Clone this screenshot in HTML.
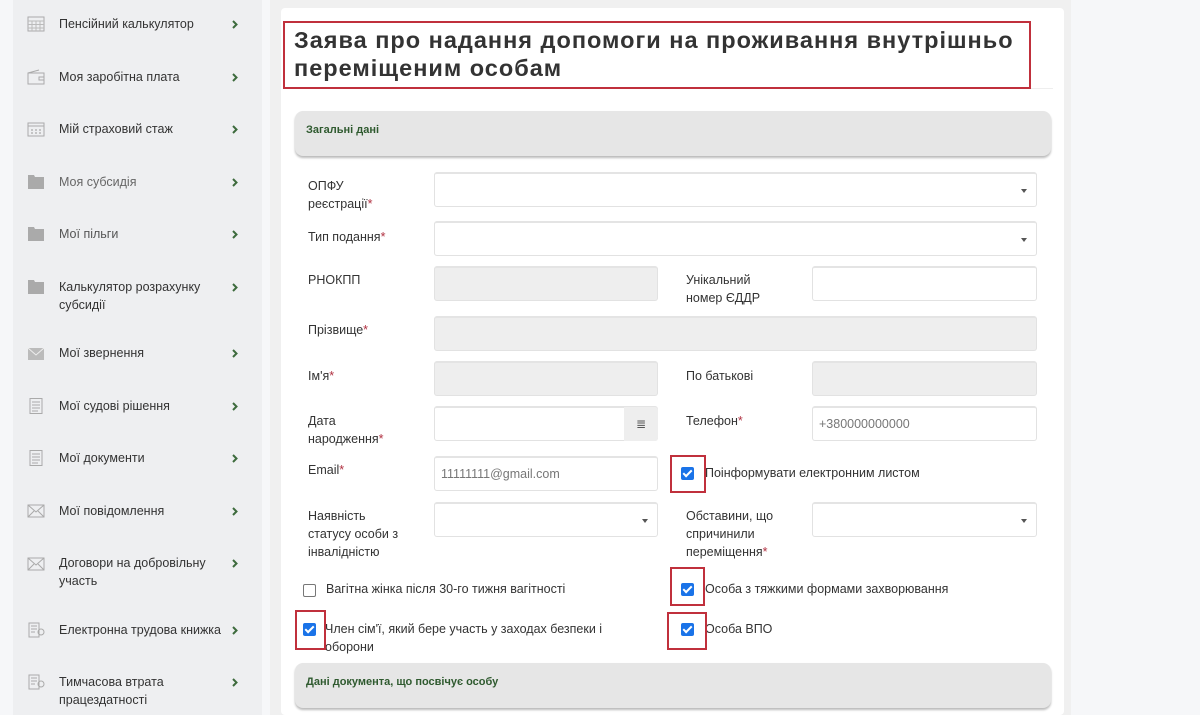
<!DOCTYPE html>
<html><head><meta charset="utf-8">
<style>
*{box-sizing:border-box;margin:0;padding:0}
body{width:1200px;height:715px;overflow:hidden;background:#f6f7f9;font-family:"Liberation Sans","DejaVu Sans",sans-serif;color:#333;position:relative}
.a{position:absolute}
#side{left:13px;top:0;width:249px;height:715px;background:#eeeff1}
.it{position:absolute;left:59px;font-size:12.5px;line-height:18px;color:#333}
.ic{position:absolute;left:27px;width:18px;height:16px}
.ch{position:absolute;left:232px;width:6px;height:9px}
#strip{left:270px;top:0;width:801px;height:715px;background:#f0f0f0}
#card{left:281px;top:8px;width:783px;height:707px;background:#fff;border-radius:4px}
.sec{position:absolute;left:295px;width:756px;height:45px;background:#e6e6e6;border-radius:8px;box-shadow:0 2px 2px #bbb}
.sec span{position:absolute;left:11px;top:13px;font-size:11px;font-weight:bold;color:#2f5a2f;font-style:normal}
.lb{position:absolute;font-size:12.5px;line-height:18px;color:#333}
.lb i{color:#b03040;font-style:normal}
.in{position:absolute;height:35px;border:1px solid #e2e2e2;border-top:2px solid #e4e4e4;border-radius:3px;background:#fff;font-size:12.5px;color:#777;padding:9px 6px}
.g{background:#eeeeee}
.dd:after{content:"";position:absolute;right:9px;top:15px;border:3px solid transparent;border-top:4px solid #555}
.cb{position:absolute;width:13px;height:13px;border-radius:2px;background:#1a73e8}
.cb:after{content:"";position:absolute;left:4px;top:1px;width:3px;height:7px;border:solid #fff;border-width:0 2px 2px 0;transform:rotate(45deg)}
.cbe{position:absolute;width:13px;height:13px;border-radius:2px;border:1px solid #777;background:#fff}
.rb{position:absolute;border:2px solid #c0303c}
</style></head><body>
<div id="side" class="a"></div>
<svg width="0" height="0" style="position:absolute"><defs><symbol id="chv" viewBox="0 0 6 9"><path d="M1 1L4.5 4.5L1 8" fill="none" stroke="#3d6b3d" stroke-width="2"/></symbol></defs></svg>
<svg class="ic" style="top:16px" viewBox="0 0 18 16"><rect x="1" y="1" width="16" height="14" fill="none" stroke="#aaa"/><path d="M1 5H17M1 8.5H17M1 12H17M5 5V15M9 5V15M13 5V15" stroke="#bbb"/></svg>
<div class="it" style="top:15px">Пенсійний калькулятор</div><svg class="ch" style="top:20px"><use href="#chv"/></svg>
<svg class="ic" style="top:69px" viewBox="0 0 18 16"><path d="M1 4H17V15H1Z M1 4L12 1" fill="none" stroke="#aaa"/><rect x="12" y="8" width="5" height="3" fill="none" stroke="#aaa"/></svg>
<div class="it" style="top:68px">Моя заробітна плата</div><svg class="ch" style="top:73px"><use href="#chv"/></svg>
<svg class="ic" style="top:121px" viewBox="0 0 18 16"><rect x="1" y="2" width="16" height="13" fill="none" stroke="#aaa"/><path d="M1 5H17" stroke="#aaa"/><path d="M4 9h2M8 9h2M12 9h2M4 12h2M8 12h2M12 12h2" stroke="#999"/></svg>
<div class="it" style="top:120px">Мій страховий стаж</div><svg class="ch" style="top:125px"><use href="#chv"/></svg>
<svg class="ic" style="top:174px" viewBox="0 0 18 16"><path d="M1 1H7L8 3H17V15H1Z" fill="#aaa"/></svg>
<div class="it" style="top:173px;color:#666">Моя субсидія</div><svg class="ch" style="top:178px"><use href="#chv"/></svg>
<svg class="ic" style="top:226px" viewBox="0 0 18 16"><path d="M1 1H7L8 3H17V15H1Z" fill="#aaa"/></svg>
<div class="it" style="top:225px;color:#555">Мої пільги</div><svg class="ch" style="top:230px"><use href="#chv"/></svg>
<svg class="ic" style="top:279px" viewBox="0 0 18 16"><path d="M1 1H7L8 3H17V15H1Z" fill="#aaa"/></svg>
<div class="it" style="top:278px">Калькулятор розрахунку<br>субсидії</div><svg class="ch" style="top:283px"><use href="#chv"/></svg>
<svg class="ic" style="top:346px" viewBox="0 0 18 16"><rect x="1" y="2" width="16" height="12" fill="#bbb"/><path d="M1 2L9 9L17 2" stroke="#eee" fill="none"/></svg>
<div class="it" style="top:344px">Мої звернення</div><svg class="ch" style="top:349px"><use href="#chv"/></svg>
<svg class="ic" style="top:398px" viewBox="0 0 18 16"><rect x="3" y="0.5" width="12" height="15" fill="none" stroke="#aaa"/><path d="M5 4h8M5 7h8M5 10h8M5 13h6" stroke="#aaa"/></svg>
<div class="it" style="top:397px">Мої судові рішення</div><svg class="ch" style="top:402px"><use href="#chv"/></svg>
<svg class="ic" style="top:450px" viewBox="0 0 18 16"><rect x="3" y="0.5" width="12" height="15" fill="none" stroke="#aaa"/><path d="M5 4h8M5 7h8M5 10h8M5 13h6" stroke="#aaa"/></svg>
<div class="it" style="top:449px">Мої документи</div><svg class="ch" style="top:454px"><use href="#chv"/></svg>
<svg class="ic" style="top:503px" viewBox="0 0 18 16"><rect x="1" y="2" width="16" height="12" fill="none" stroke="#aaa"/><path d="M1 2L9 9L17 2M1 14L7 8M17 14L11 8" stroke="#aaa" fill="none"/></svg>
<div class="it" style="top:502px">Мої повідомлення</div><svg class="ch" style="top:507px"><use href="#chv"/></svg>
<svg class="ic" style="top:556px" viewBox="0 0 18 16"><rect x="1" y="2" width="16" height="12" fill="none" stroke="#aaa"/><path d="M1 2L9 9L17 2M1 14L7 8M17 14L11 8" stroke="#aaa" fill="none"/></svg>
<div class="it" style="top:554px">Договори на добровільну<br>участь</div><svg class="ch" style="top:559px"><use href="#chv"/></svg>
<svg class="ic" style="top:622px" viewBox="0 0 18 16"><path d="M2 1H12V15H2Z" fill="none" stroke="#aaa"/><path d="M4 4h6M4 7h6M4 10h4" stroke="#aaa"/><circle cx="14" cy="10" r="3" fill="none" stroke="#aaa"/></svg>
<div class="it" style="top:621px">Електронна трудова книжка</div><svg class="ch" style="top:626px"><use href="#chv"/></svg>
<svg class="ic" style="top:674px" viewBox="0 0 18 16"><path d="M2 1H12V15H2Z" fill="none" stroke="#aaa"/><path d="M4 4h6M4 7h6M4 10h4" stroke="#aaa"/><circle cx="14" cy="10" r="3" fill="none" stroke="#aaa"/></svg>
<div class="it" style="top:673px">Тимчасова втрата<br>працездатності</div><svg class="ch" style="top:678px"><use href="#chv"/></svg>

<div id="strip" class="a"></div>
<div id="card" class="a"></div>
<div class="a" style="left:283px;top:88px;width:770px;height:1px;background:#eee"></div>
<div class="rb" style="left:283px;top:21px;width:748px;height:68px"></div>
<div class="a" style="left:294px;top:26px;font-size:23.5px;font-weight:bold;line-height:28px;color:#333;letter-spacing:1px">Заява про надання допомоги на проживання внутрішньо<br>переміщеним особам</div>

<div class="sec" style="top:111px"><span>Загальні дані</span></div>

<div class="lb" style="left:308px;top:177px">ОПФУ<br>реєстрації<i>*</i></div>
<div class="in dd" style="left:434px;top:172px;width:603px"></div>
<div class="lb" style="left:308px;top:228px">Тип подання<i>*</i></div>
<div class="in dd" style="left:434px;top:221px;width:603px"></div>
<div class="lb" style="left:308px;top:271px">РНОКПП</div>
<div class="in g" style="left:434px;top:266px;width:224px"></div>
<div class="lb" style="left:686px;top:271px">Унікальний<br>номер ЄДДР</div>
<div class="in" style="left:812px;top:266px;width:225px"></div>
<div class="lb" style="left:308px;top:321px">Прізвище<i>*</i></div>
<div class="in g" style="left:434px;top:316px;width:603px"></div>
<div class="lb" style="left:308px;top:367px">Ім'я<i>*</i></div>
<div class="in g" style="left:434px;top:361px;width:224px"></div>
<div class="lb" style="left:686px;top:367px">По батькові</div>
<div class="in g" style="left:812px;top:361px;width:225px"></div>
<div class="lb" style="left:308px;top:412px">Дата<br>народження<i>*</i></div>
<div class="in" style="left:434px;top:406px;width:224px"></div>
<div class="a" style="left:624px;top:407px;width:34px;height:34px;background:#eee;border-radius:0 3px 3px 0;text-align:center;font-size:12px;line-height:34px;color:#555">≣</div>
<div class="lb" style="left:686px;top:412px">Телефон<i>*</i></div>
<div class="in" style="left:812px;top:406px;width:225px">+380000000000</div>
<div class="lb" style="left:308px;top:461px">Email<i>*</i></div>
<div class="in" style="left:434px;top:456px;width:224px">11111111@gmail.com</div>
<div class="cb" style="left:681px;top:467px"></div>
<div class="lb" style="left:705px;top:464px">Поінформувати електронним листом</div>
<div class="rb" style="left:670px;top:455px;width:36px;height:38px"></div>
<div class="lb" style="left:308px;top:507px">Наявність<br>статусу особи з<br>інвалідністю</div>
<div class="in dd" style="left:434px;top:502px;width:224px"></div>
<div class="lb" style="left:686px;top:507px">Обставини, що<br>спричинили<br>переміщення<i>*</i></div>
<div class="in dd" style="left:812px;top:502px;width:225px"></div>

<div class="cbe" style="left:303px;top:584px"></div>
<div class="lb" style="left:326px;top:580px">Вагітна жінка після 30-го тижня вагітності</div>
<div class="cb" style="left:681px;top:583px"></div>
<div class="lb" style="left:705px;top:580px">Особа з тяжкими формами захворювання</div>
<div class="rb" style="left:670px;top:567px;width:35px;height:39px"></div>
<div class="cb" style="left:303px;top:623px"></div>
<div class="lb" style="left:325px;top:620px">Член сім'ї, який бере участь у заходах безпеки і<br>оборони</div>
<div class="rb" style="left:295px;top:610px;width:31px;height:40px"></div>
<div class="cb" style="left:681px;top:623px"></div>
<div class="lb" style="left:705px;top:620px">Особа ВПО</div>
<div class="rb" style="left:667px;top:612px;width:40px;height:38px"></div>

<div class="sec" style="top:663px"><span>Дані документа, що посвічує особу</span></div>
</body></html>
